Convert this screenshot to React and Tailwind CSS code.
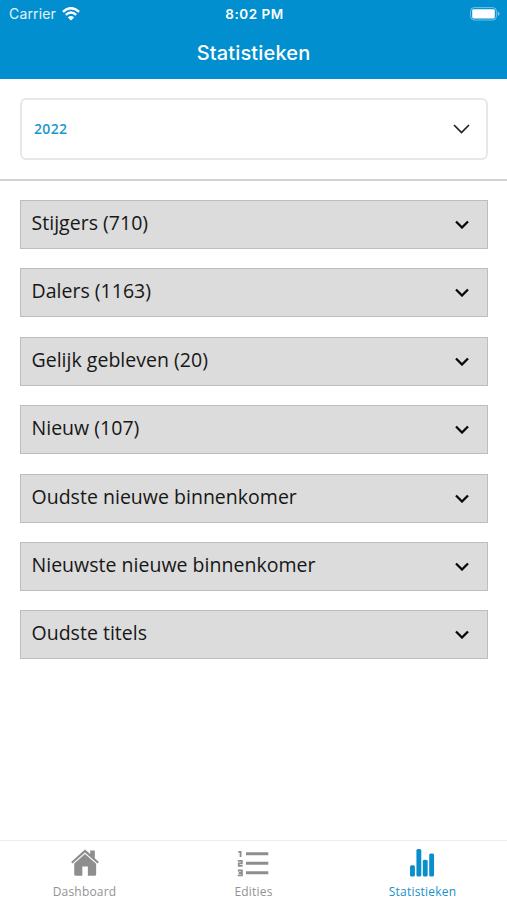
const sections = [
  'Stijgers (710)',
  'Dalers (1163)',
  'Gelijk gebleven (20)',
  'Nieuw (107)',
  'Oudste nieuwe binnenkomer',
  'Nieuwste nieuwe binnenkomer',
  'Oudste titels',
];

function WifiIcon() {
  return (
    <svg className="ml-[6px] h-[14px] w-[18px]" viewBox="0 0 18 14" fill="none" stroke="#fff" strokeWidth="2.4">
      <path d="M.9 4.8Q9-2.500 17.100 4.800" />
      <path d="M3.800 7.900Q9 3.200 14.200 7.900" />
      <path d="M9 13.500 5.900 10.400Q9 7.700 12.100 10.400Z" fill="#fff" stroke="none" />
    </svg>
  );
}

function BatteryIcon() {
  return (
    <svg className="h-[14px] w-[30px]" viewBox="0 0 30 14" fill="none">
      <rect x=".6" y=".6" width="25.800" height="12.400" rx="3.600" stroke="#fff" strokeOpacity=".45" />
      <rect x="2.200" y="2.200" width="22.600" height="9.200" rx="1.400" fill="#fff" />
      <path d="M27.800 4.500Q29.600 5.300 29.600 6.800T27.800 9.100Z" fill="#fff" fillOpacity=".5" />
    </svg>
  );
}

function HomeIcon() {
  return (
    <svg className="h-[32px] w-[32px]" viewBox="0 0 32 32" fill="#8e8e8e">
      <path d="M16 1.500 1.400 14.600 2.900 16.200 16 4.600 29.100 16.200 30.600 14.600 26.300 10.700V2.500H21.500V6.400Z" />
      <path d="M16 6.200 4.700 16.200V27.500Q4.700 29.200 6.400 29.200H13.200V19.500H19V29.200H26Q27.700 29.200 27.700 27.500V16.600Z" />
    </svg>
  );
}

function ListIcon() {
  return (
    <svg className="h-[32px] w-[34px]" viewBox="0 0 34 32" fill="none" stroke="#8e8e8e">
      <path d="M8.600 6H32M8.600 16H32M8.600 26H32" strokeWidth="3" />
      <path
        d="M.5 4H2.900V9.500M0 13.600H4.200V16.200H1V18.800H5M0 23.600H4.300V28.800H0M1 26.200H4.200"
        strokeWidth="1.900"
      />
    </svg>
  );
}

function BarsIcon() {
  return (
    <svg className="h-[32px] w-[28px]" viewBox="0 0 28 32" fill="#088ecc">
      <rect x=".4" y="18" width="5.100" height="12" rx="1.600" />
      <rect x="7.100" y="1" width="5.100" height="29" rx="1.600" />
      <rect x="13.800" y="12.300" width="5.100" height="17.700" rx="1.600" />
      <rect x="20.500" y="5.800" width="5.100" height="24.200" rx="1.600" />
    </svg>
  );
}

function Tab({ icon, label, active }) {
  return (
    <button
      className={`flex flex-1 flex-col items-center pt-[6.500px] ${active ? 'text-[#218fc5]' : 'text-[#929292]'}`}
    >
      {icon}
      <span className="mt-[6px] font-['Open_Sans',sans-serif] text-[12px] leading-[16px] font-medium tracking-[0.200px]">
        {label}
      </span>
    </button>
  );
}

export default function App() {
  return (
    <div className="flex h-[900px] w-[507px] flex-col overflow-hidden bg-white font-['Open_Sans',sans-serif]">
      <header className="h-[79px] shrink-0 bg-[#028fcf] font-['Inter',sans-serif] text-white">
        <div className="grid h-[27px] grid-cols-3 items-center pr-[7px] pl-[9px]">
          <div className="flex items-center text-[14px] text-white/90">
            <span className="tracking-[0.150px]">Carrier</span>
            <WifiIcon />
          </div>
          <div className="pt-[1px] text-center text-[13.500px] font-semibold tracking-[0.500px]">8:02 PM</div>
          <div className="flex justify-end">
            <BatteryIcon />
          </div>
        </div>
        <h1 className="pt-[12px] text-center text-[20px] leading-[28px] font-[550] tracking-[0.150px]">Statistieken</h1>
      </header>
      <div className="shrink-0 border-b-2 border-[#d2d2d2] pt-[19px] pr-[19px] pb-[19px] pl-[20px]">
        <button className="flex h-[62px] w-full items-center justify-between rounded-[6px] border-2 border-[#e8e8e8] pr-[16px] pl-[12px]">
          <span className="pb-[1px] text-[14px] font-semibold tracking-[0.350px] text-[#1c97ce]">2022</span>
          <svg className="h-[10px] w-[17px]" viewBox="0 0 17 10" fill="none" stroke="#222" strokeWidth="1.700">
            <path d="M1 1 8.500 8.500 16 1" />
          </svg>
        </button>
      </div>
      <main className="flex flex-1 flex-col gap-[19.400px] pt-[19px] pr-[19px] pl-[20px]">
        {sections.map((title) => (
          <button
            key={title}
            className="flex h-[49px] w-full items-center justify-between border border-[#bdbdbd] bg-[#dcdcdc] pr-[18px] pl-[10.500px] text-left"
          >
            <span className="pb-[3px] text-[19.500px] leading-[28px] tracking-[0.020px] text-[#171717]">{title}</span>
            <svg className="h-[9px] w-[14px]" viewBox="0 0 14 9" fill="none" stroke="#080808" strokeWidth="2.300">
              <path d="M1 1.500 7 7.500 13 1.500" />
            </svg>
          </button>
        ))}
      </main>
      <nav className="flex h-[60px] shrink-0 border-t border-[#ececec]">
        <Tab icon={<HomeIcon />} label="Dashboard" />
        <Tab icon={<ListIcon />} label="Edities" />
        <Tab icon={<BarsIcon />} label="Statistieken" active />
      </nav>
    </div>
  );
}
